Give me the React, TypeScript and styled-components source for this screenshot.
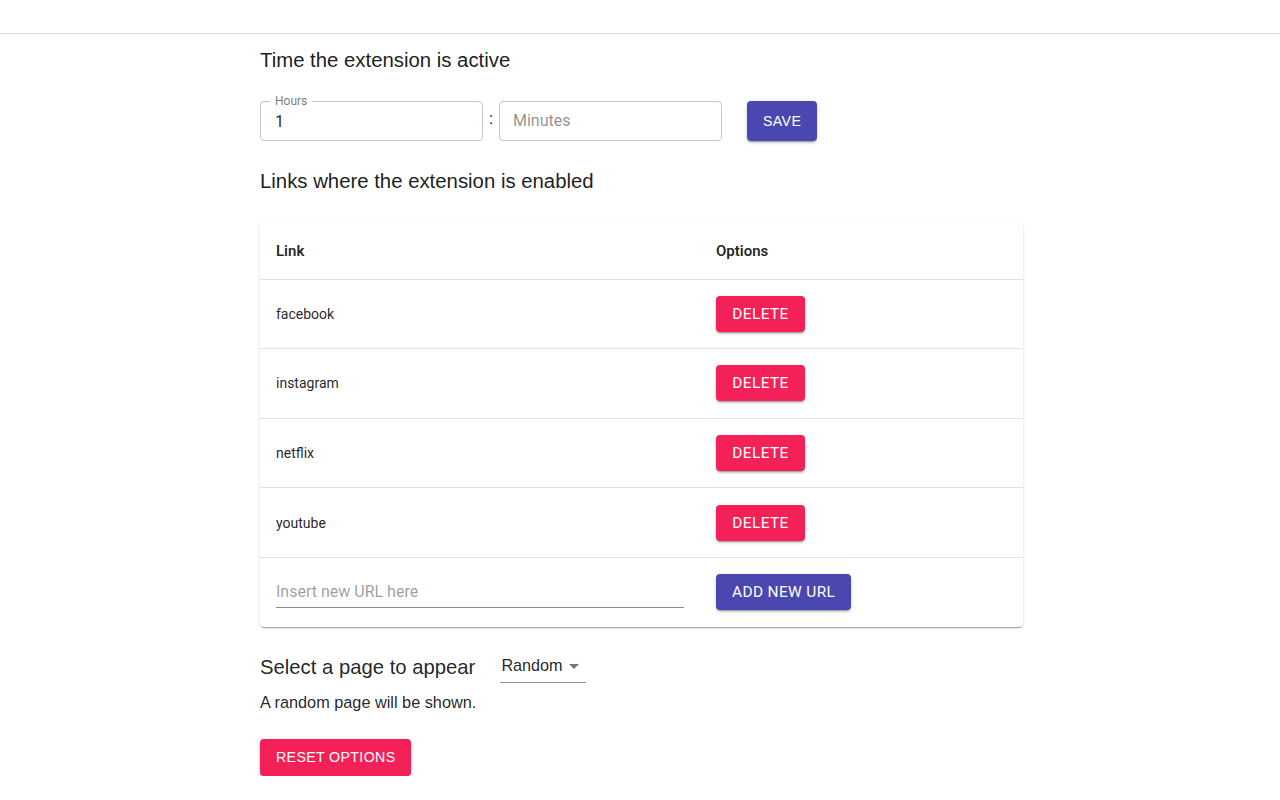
import React from "react";
import styled, { createGlobalStyle } from "styled-components";

const GlobalStyle = createGlobalStyle`
  html, body { margin: 0; padding: 0; background: #fff; }
  body { font-family: "Liberation Sans", Arial, sans-serif; color: rgba(0,0,0,0.87); }
  * { box-sizing: border-box; }
`;

const TopBar = styled.div`
  height: 34px;
  border-bottom: 1px solid #dcdcdc;
`;

const Container = styled.main`
  box-sizing: content-box;
  width: 763px;
  margin: 0 auto;
  padding-left: 3px;
`;

const Heading = styled.h2<{ $top: number; $bottom: number }>`
  margin: ${(p) => p.$top}px 0 ${(p) => p.$bottom}px;
  font-size: 20.35px;
  font-weight: 400;
  line-height: 24px;
  color: rgba(0, 0, 0, 0.9);
`;

const TimeRow = styled.div`
  display: flex;
  align-items: center;
`;

const Outlined = styled.div`
  position: relative;
  width: 223px;
  height: 40px;
  border: 1px solid #c4c4c4;
  border-radius: 4px;
  display: flex;
  align-items: center;
  padding: 0 13px 1px;
  font-family: Roboto, sans-serif;
  font-size: 16px;
`;

const FloatLabel = styled.span`
  position: absolute;
  top: -8px;
  left: 9px;
  padding: 0 5px;
  background: #fff;
  font-size: 12px;
  line-height: 14px;
  color: rgba(0, 0, 0, 0.55);
  font-family: Roboto, sans-serif;
`;

const Value = styled.span`
  color: rgba(0, 0, 0, 0.87);
  padding: 1px 0 0 1px;
`;

const Placeholder = styled.span`
  color: rgba(0, 0, 0, 0.45);
`;

const Colon = styled.span`
  width: 16px;
  text-align: center;
  font-size: 17px;
  margin-top: -6px;
  font-family: Roboto, sans-serif;
`;

const Button = styled.button<{ $color: "primary" | "secondary"; $h?: number; $arial?: boolean }>`
  border: 0;
  border-radius: 4px;
  height: ${(p) => p.$h ?? 36}px;
  padding: 0 16px;
  background: ${(p) => (p.$color === "primary" ? "#4a48b0" : "#f42159")};
  color: #fff;
  font-family: ${(p) => (p.$arial ? '"Liberation Sans", Arial, sans-serif' : "Roboto, sans-serif")};
  font-size: ${(p) => (p.$arial ? "14.2px" : "15.4px")};
  font-weight: 400;
  letter-spacing: 0.025em;
  text-transform: uppercase;
  box-shadow: 0px 3px 1px -2px rgba(0,0,0,0.2), 0px 2px 2px 0px rgba(0,0,0,0.14), 0px 1px 5px 0px rgba(0,0,0,0.12);
  cursor: pointer;
`;

const SaveButton = styled(Button)`
  margin-left: 25px;
  width: 70px;
`;

const Paper = styled.div`
  background: #fff;
  border-radius: 4px;
  box-shadow: 0px 2px 1px -1px rgba(0,0,0,0.2), 0px 1px 1px 0px rgba(0,0,0,0.14), 0px 1px 3px 0px rgba(0,0,0,0.12);
  overflow: hidden;
`;

const Table = styled.table`
  width: 100%;
  border-collapse: collapse;
  font-family: Roboto, sans-serif;
  font-size: 14px;
`;

const Th = styled.th<{ $w?: number }>`
  text-align: left;
  font-weight: 600;
  font-size: 15px;
  height: 56px;
  padding: 0 16px;
  border-bottom: 1px solid #e0e0e0;
  color: rgba(0, 0, 0, 0.87);
  width: ${(p) => (p.$w ? `${p.$w}px` : "auto")};
`;

const Td = styled.td<{ $last?: boolean }>`
  padding: 16px;
  height: 69.6px;
  border-bottom: ${(p) => (p.$last ? "0" : "1px solid #e0e0e0")};
  color: rgba(0, 0, 0, 0.87);
  vertical-align: middle;
`;

const DeleteButton = styled(Button)`
  width: 89px;
`;

const UrlInput = styled.div`
  width: 408px;
  height: 32px;
  border-bottom: 1px solid #8c8c8c;
  display: flex;
  align-items: center;
  padding-top: 0;
  font-size: 16px;
  color: rgba(0, 0, 0, 0.4);
`;

const SelectRow = styled.div`
  display: flex;
  align-items: center;
  gap: 25px;
  margin-top: 25px;
`;

const SelectHeading = styled.span`
  font-size: 20.3px;
  line-height: 24px;
`;

const Select = styled.div`
  width: 86px;
  height: 31px;
  border-bottom: 1px solid #8c8c8c;
  display: flex;
  align-items: center;
  justify-content: space-between;
  padding: 0 7px 3px 1px;
  font-size: 16.2px;
  color: rgba(0, 0, 0, 0.87);
`;

const Caret = styled.span`
  width: 0;
  height: 0;
  border-left: 5px solid transparent;
  border-right: 5px solid transparent;
  border-top: 5px solid rgba(0, 0, 0, 0.54);
  margin-top: 2px;
`;

const Note = styled.p`
  margin: 9px 0 27px;
  font-size: 16.3px;
  line-height: 20px;
`;

const links = ["facebook", "instagram", "netflix", "youtube"];

export default function App() {
  return (
    <>
      <GlobalStyle />
      <TopBar />
      <Container>
        <Heading $top={14} $bottom={29}>Time the extension is active</Heading>
        <TimeRow>
          <Outlined>
            <FloatLabel>Hours</FloatLabel>
            <Value>1</Value>
          </Outlined>
          <Colon>:</Colon>
          <Outlined>
            <Placeholder>Minutes</Placeholder>
          </Outlined>
          <SaveButton $color="primary" $h={40} $arial>Save</SaveButton>
        </TimeRow>
        <Heading $top={28} $bottom={30}>Links where the extension is enabled</Heading>
        <Paper>
          <Table>
            <thead>
              <tr>
                <Th $w={440}>Link</Th>
                <Th>Options</Th>
              </tr>
            </thead>
            <tbody>
              {links.map((l) => (
                <tr key={l}>
                  <Td>{l}</Td>
                  <Td>
                    <DeleteButton $color="secondary">Delete</DeleteButton>
                  </Td>
                </tr>
              ))}
              <tr>
                <Td $last>
                  <UrlInput>Insert new URL here</UrlInput>
                </Td>
                <Td $last>
                  <Button $color="primary">Add new URL</Button>
                </Td>
              </tr>
            </tbody>
          </Table>
        </Paper>
        <SelectRow>
          <SelectHeading>Select a page to appear</SelectHeading>
          <Select>
            <span>Random</span>
            <Caret />
          </Select>
        </SelectRow>
        <Note>A random page will be shown.</Note>
        <Button $color="secondary" $h={37} $arial>Reset options</Button>
      </Container>
    </>
  );
}
